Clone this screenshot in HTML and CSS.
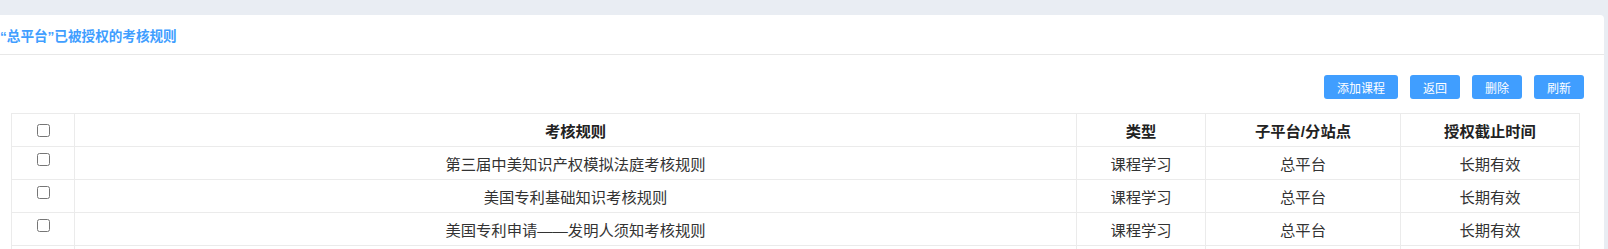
FILE: index.html
```html
<!DOCTYPE html>
<html lang="zh-CN">
<head>
    <meta charset="UTF-8">
    <meta name="viewport" content="width=device-width, initial-scale=1.0">
    <title>考核规则授权</title>
    <link rel="stylesheet" href="styles.css">
</head>
<body>
    <div class="panel">
        <div class="panel-head">
            <span class="panel-title">“总平台”已被授权的考核规则</span>
        </div>
        <div class="toolbar">
            <button class="btn">添加课程</button>
            <button class="btn">返回</button>
            <button class="btn">删除</button>
            <button class="btn">刷新</button>
        </div>
        <div class="table-wrap">
            <table class="rule-table">
                <colgroup>
                    <col class="col-check">
                    <col class="col-rule">
                    <col class="col-type">
                    <col class="col-site">
                    <col class="col-date">
                </colgroup>
                <thead>
                    <tr>
                        <th><input type="checkbox"></th>
                        <th>考核规则</th>
                        <th>类型</th>
                        <th>子平台/分站点</th>
                        <th>授权截止时间</th>
                    </tr>
                </thead>
                <tbody>
                    <tr>
                        <td class="check"><input type="checkbox"></td>
                        <td>第三届中美知识产权模拟法庭考核规则</td>
                        <td>课程学习</td>
                        <td>总平台</td>
                        <td>长期有效</td>
                    </tr>
                    <tr>
                        <td class="check"><input type="checkbox"></td>
                        <td>美国专利基础知识考核规则</td>
                        <td>课程学习</td>
                        <td>总平台</td>
                        <td>长期有效</td>
                    </tr>
                    <tr>
                        <td class="check"><input type="checkbox"></td>
                        <td>美国专利申请——发明人须知考核规则</td>
                        <td>课程学习</td>
                        <td>总平台</td>
                        <td>长期有效</td>
                    </tr>
                    <tr>
                        <td class="check"></td>
                        <td></td>
                        <td></td>
                        <td></td>
                        <td></td>
                    </tr>
                </tbody>
            </table>
        </div>
    </div>
</body>
</html>
```

FILE: styles.css
```css
body {
    margin: 0;
    background-color: #e9edf3;
    font-family: "Liberation Sans", "Noto Sans CJK SC", sans-serif;
    color: #333;
    overflow: hidden;
}
.panel {
    margin: 15px 4px 0 0;
    background-color: #fff;
    border-radius: 0 4px 0 0;
    min-height: 260px;
}
.panel-head {
    height: 39px;
    border-bottom: 1px solid #e8e8e8;
    display: flex;
    align-items: center;
}
.panel-title {
    font-size: 13.6px;
    font-weight: bold;
    color: #409eff;
}
.toolbar {
    display: flex;
    justify-content: flex-end;
    gap: 12px;
    padding: 20px 20px 0 0;
    margin-bottom: 14px;
}
.btn {
    height: 24px;
    padding: 0 13px;
    border: none;
    border-radius: 3px;
    background-color: #409eff;
    color: #fff;
    font-family: inherit;
    font-size: 12px;
    cursor: pointer;
}
.table-wrap {
    padding: 0 24px 0 11px;
}
.rule-table {
    width: 100%;
    table-layout: fixed;
    border-collapse: collapse;
    font-size: 15.3px;
}
.col-check {
    width: 63px;
}
.col-type {
    width: 129px;
}
.col-site {
    width: 195px;
}
.col-date {
    width: 179px;
}
.rule-table th,
.rule-table td {
    border: 1px solid #ebebeb;
    height: 32px;
    padding: 0;
    text-align: center;
    vertical-align: middle;
}
.rule-table th {
    font-weight: bold;
    color: #222;
}
.rule-table td.check {
    vertical-align: top;
}
.rule-table input[type="checkbox"] {
    display: block;
    margin: 0 auto;
    width: 13px;
    height: 13px;
}
.rule-table td.check input[type="checkbox"] {
    margin-top: 6px;
}
```
